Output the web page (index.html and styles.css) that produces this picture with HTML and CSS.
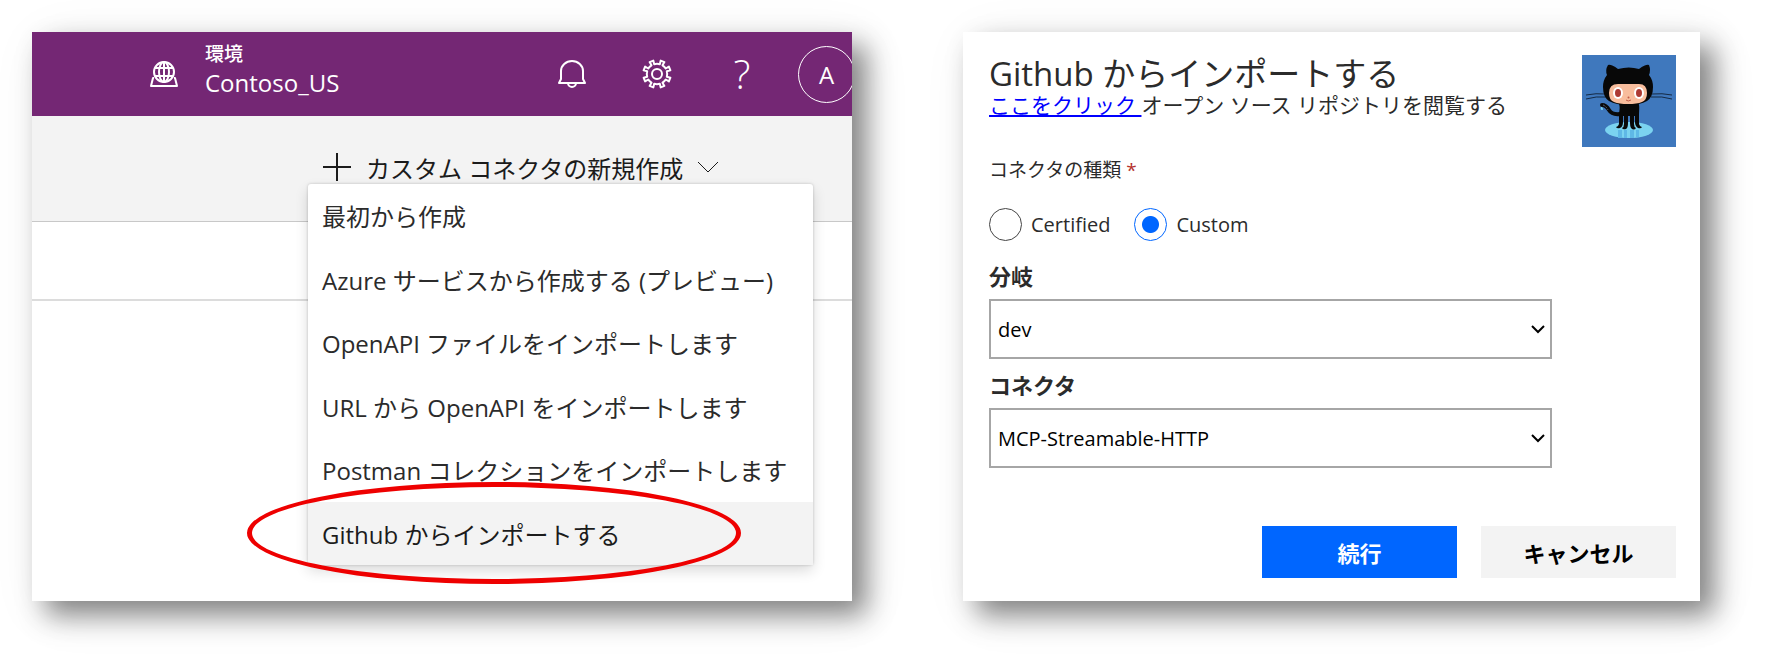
FILE: index.html
```html
<!DOCTYPE html>
<html lang="ja">
<head>
    <meta charset="UTF-8">
    <meta name="viewport" content="width=device-width, initial-scale=1.0">
    <title>Github からインポートする</title>
    <link rel="stylesheet" href="styles.css">
</head>
<body>
    <main class="panels">
        <section class="panel portal">
            <header class="header">
                <svg class="env-icon" viewBox="0 0 30 28" aria-hidden="true">
                    <circle cx="15" cy="12" r="10"/>
                    <ellipse cx="15" cy="12" rx="5" ry="10"/>
                    <path d="M15 2v20M6 8h18M6 16h18"/>
                    <path d="M5 18H4L2 26h26l-2-8h-1"/>
                </svg>
                <div class="env">
                    <div class="env-label">環境</div>
                    <div class="env-name">Contoso_US</div>
                </div>
                <div class="header-icons">
                    <button class="icon-button" aria-label="通知">
                        <svg viewBox="0 0 30 30">
                            <path d="M2 24l2-4v-8a11 10 0 0 1 22 0v8l2 4z"/>
                            <path d="M11 24a4 4 0 0 0 8 0"/>
                        </svg>
                    </button>
                    <button class="icon-button" aria-label="設定">
                        <svg viewBox="0 0 30 30">
                            <path d="M12.2 5.2L11.3 1.6L7.6 3.1L9.5 6.3A10.200 10.200 0 0 0 6.300 9.500L3.100 7.600L1.600 11.300L5.200 12.200A10.200 10.200 0 0 0 5.200 17.800L1.600 18.700L3.100 22.400L6.300 20.500A10.200 10.200 0 0 0 9.500 23.700L7.600 26.900L11.300 28.400L12.200 24.800A10.200 10.200 0 0 0 17.800 24.800L18.700 28.400L22.400 26.900L20.500 23.700A10.200 10.200 0 0 0 23.700 20.500L26.900 22.400L28.400 18.700L24.800 17.800A10.200 10.200 0 0 0 24.800 12.200L28.400 11.300L26.900 7.600L23.700 9.500A10.200 10.200 0 0 0 20.500 6.300L22.400 3.100L18.700 1.600L17.800 5.200A10.200 10.200 0 0 0 12.200 5.200z"/>
                            <circle cx="15" cy="15" r="5"/>
                        </svg>
                    </button>
                    <button class="icon-button help" aria-label="ヘルプ">?</button>
                </div>
                <button class="avatar">A</button>
            </header>

            <div class="toolbar">
                <div class="dropdown">
                    <button class="new-connector">
                        <svg class="plus" viewBox="0 0 30 30"><path d="M15 1v28M1 15h28"/></svg>
                        カスタム コネクタの新規作成
                        <svg class="chevron" viewBox="0 0 22 12"><path d="M1 1l10 10L21 1"/></svg>
                    </button>
                    <div class="menu">
                        <button class="menu-item">最初から作成</button>
                        <button class="menu-item">Azure サービスから作成する (プレビュー)</button>
                        <button class="menu-item">OpenAPI ファイルをインポートします</button>
                        <button class="menu-item">URL から OpenAPI をインポートします</button>
                        <button class="menu-item">Postman コレクションをインポートします</button>
                        <button class="menu-item active">Github からインポートする</button>
                        <span class="highlight"></span>
                    </div>
                </div>
            </div>
            <div class="list-head"></div>
        </section>

        <form class="panel dialog">
            <div class="dialog-head">
                <div>
                    <h1>Github からインポートする</h1>
                    <p><a href="#">ここをクリック </a>オープン ソース リポジトリを閲覧する</p>
                </div>
                <svg class="octocat" viewBox="0 0 94 92" role="img" aria-label="GitHub">
                    <rect width="94" height="92" fill="#3f78bd"/>
                    <ellipse cx="47" cy="75" rx="24" ry="8" fill="#7bd3f0"/>
                    <path d="M36 75h4v8h-4zM42 75h3v8h-3zM48 75h4v8h-4zM54 75h3v7h-3z" fill="#5fb8e6"/>
                    <path d="M4 40q10-2 20-1M4 44q10-3 21-2M90 40q-10-2-20-1M90 44q-10-3-21-2" fill="none" stroke="#152a45"/>
                    <path d="M20 50q4 0 7 5t11 4" fill="none" stroke="#0a0a0a" stroke-width="4" stroke-linecap="round"/>
                    <path d="M21 50q3 1 5 5" fill="none" stroke="#526579" stroke-dasharray="2 1"/>
                    <path d="M19 52q-1 3 1 3t0-3" fill="#7bd3f0"/>
                    <path d="M38 47h18c2 3 1 8 1 15v6q0 3 3 4-1 2-4 1-3-2-3-6v-6h-1v8q0 3 2 4-2 3-5 0-1-2-1-5v-7h-2v7q0 5-2 6-3 1-4-1 2-1 2-4v-8h-1v6q0 5-3 6-3 1-4-1 3-1 3-4v-7c0-6 2-9-1-14z" fill="#080808"/>
                    <path d="M26 10Q29 9 36 14Q47 11 57 14Q64 9 67 10Q69 15 67 20Q71 25 71 32Q71 42 65 46Q58 50 46 50Q34 50 27 46Q21 42 21 32Q21 25 25 20Q23 15 26 10z" fill="#080808"/>
                    <path d="M36 29h21q8 0 8 9 0 7-5 9-5 2-14 2t-14-2q-5-2-5-9 0-9 9-9z" fill="#f8bd9d"/>
                    <ellipse cx="36" cy="38" rx="5" ry="6" fill="#fff"/>
                    <ellipse cx="57" cy="38" rx="5" ry="6" fill="#fff"/>
                    <ellipse cx="36" cy="38" rx="3" ry="4" fill="#ad3a34"/>
                    <ellipse cx="57" cy="38" rx="3" ry="4" fill="#ad3a34"/>
                    <circle cx="46.500" cy="42.500" r="1" fill="#c25b48"/>
                    <path d="M44 45q2 2 5 0" fill="none" stroke="#c25b48"/>
                </svg>
            </div>

            <fieldset>
                <legend>コネクタの種類 <span class="required">*</span></legend>
                <div class="radios">
                    <label><input type="radio" name="type">Certified</label>
                    <label><input type="radio" name="type" checked>Custom</label>
                </div>
            </fieldset>

            <div class="field">
                <label for="branch">分岐</label>
                <div class="select-box">
                    <select id="branch">
                        <option>dev</option>
                    </select>
                    <svg viewBox="0 0 14 9"><path d="M1 1l6 6 6-6"/></svg>
                </div>
            </div>
            <div class="field">
                <label for="connector">コネクタ</label>
                <div class="select-box">
                    <select id="connector">
                        <option>MCP-Streamable-HTTP</option>
                    </select>
                    <svg viewBox="0 0 14 9"><path d="M1 1l6 6 6-6"/></svg>
                </div>
            </div>

            <div class="actions">
                <button type="button" class="button primary">続行</button>
                <button type="button" class="button">キャンセル</button>
            </div>
        </form>
    </main>
</body>
</html>
```
FILE: styles.css
```css
* {
    box-sizing: border-box;
}
body {
    margin: 0;
    background: #fff;
    color: #2b2b2b;
    font-family: "Open Sans", "Noto Sans CJK JP", sans-serif;
}
button {
    border: none;
    padding: 0;
    background: none;
    color: inherit;
    font-family: inherit;
    cursor: pointer;
}
svg {
    display: block;
    flex: none;
}
.panels {
    display: grid;
    grid-template-columns: 820fr 737fr;
    gap: 111px;
    padding: 32px 65px 65px 32px;
}
.panel {
    min-width: 0;
    background: #fff;
    box-shadow: 14px 14px 26px rgba(0, 0, 0, 0.46), 10px 10px 50px rgba(0, 0, 0, 0.08);
}

/* portal */
.header {
    display: flex;
    align-items: center;
    gap: 41px;
    height: 84px;
    padding-left: 117px;
    overflow: hidden;
    background: #742774;
    color: #fff;
}
.header svg {
    fill: none;
    stroke: #fff;
    stroke-width: 2;
    stroke-linejoin: round;
}
.header .env-icon {
    width: 30px;
    height: 28px;
    margin-right: -15px;
}
.env {
    padding-bottom: 8px;
}
.env-label {
    font-size: 19px;
    font-weight: 500;
    line-height: 26px;
}
.env-name {
    font-size: 24px;
    line-height: 32px;
}
.header-icons {
    display: flex;
    gap: 55px;
    margin-left: auto;
}
.icon-button {
    width: 30px;
    height: 30px;
}
.help {
    font-size: 40px;
    font-weight: 300;
    line-height: 30px;
}
.avatar {
    flex: none;
    width: 57px;
    height: 57px;
    margin-right: -3px;
    border: 1px solid #fff;
    border-radius: 50%;
    font-size: 24px;
}
.toolbar {
    height: 106px;
    padding: 34px 0 0 290px;
    border-bottom: 1px solid #c8c8c8;
    background: #f3f3f3;
}
.dropdown {
    position: relative;
    width: max-content;
}
.new-connector {
    display: flex;
    align-items: center;
    gap: 14px;
    height: 34px;
    color: #1b1b1b;
    font-size: 24px;
    white-space: nowrap;
}
.plus {
    width: 30px;
    height: 30px;
    fill: none;
    stroke: #1b1b1b;
    stroke-width: 2;
}
.chevron {
    width: 22px;
    height: 12px;
    fill: none;
    stroke: #1b1b1b;
}
.menu {
    position: absolute;
    top: 100%;
    left: -14px;
    display: grid;
    grid-auto-rows: 1fr;
    width: 505px;
    height: 381px;
    border-radius: 3px;
    background: #fff;
    box-shadow: 0 0 3px rgba(0, 0, 0, 0.2), 0 6px 14px rgba(0, 0, 0, 0.14);
}
.menu-item {
    padding: 0 14px;
    font-size: 24px;
    text-align: left;
    white-space: nowrap;
}
.menu-item.active {
    background: #f3f3f3;
    color: #1b1b1b;
}
.highlight {
    position: absolute;
    bottom: -19px;
    left: -61px;
    width: 494px;
    height: 102px;
    border: 5px solid #e00;
    border-radius: 50%;
    pointer-events: none;
}
.list-head {
    height: 79px;
    border-bottom: 2px solid #dcdcdc;
}

/* dialog */
.dialog {
    padding: 23px 24px 23px 26px;
}
.dialog-head {
    display: flex;
    justify-content: space-between;
    height: 92px;
}
h1 {
    margin: 0;
    font-size: 33px;
    font-weight: 400;
    line-height: 38px;
}
p {
    margin: 0;
    font-size: 21px;
    line-height: 24px;
}
a {
    color: #00f;
}
.octocat {
    width: 94px;
    height: 92px;
}
fieldset {
    margin: 10px 0 22px;
    padding: 0;
    border: none;
}
legend {
    padding: 0;
    font-size: 19px;
    line-height: 26px;
}
.required {
    color: #b5322d;
}
.radios {
    display: flex;
    gap: 24px;
    padding-top: 25px;
}
.radios label {
    display: flex;
    align-items: center;
    gap: 9px;
    height: 33px;
    font-size: 20px;
}
.radios input {
    appearance: none;
    width: 33px;
    height: 33px;
    margin: 0;
    border: 1px solid #444;
    border-radius: 50%;
}
.radios input:checked {
    border-color: #0066ff;
    background: radial-gradient(circle, #0066ff 8px, transparent 9px);
}
.field {
    margin-bottom: 13px;
}
.field label {
    display: block;
    margin-bottom: 10px;
    font-size: 22px;
    font-weight: 700;
    line-height: 26px;
}
.select-box {
    position: relative;
    width: 82%;
}
.select-box select {
    appearance: none;
    display: block;
    width: 100%;
    height: 60px;
    padding: 0 7px;
    border: 2px solid #a6a6a6;
    border-radius: 0;
    background: #fff;
    color: #000;
    font-family: inherit;
    font-size: 20px;
}
.select-box svg {
    position: absolute;
    top: 26px;
    right: 7px;
    width: 14px;
    height: 9px;
    fill: none;
    stroke: #000;
    stroke-width: 2;
    pointer-events: none;
}
.actions {
    display: flex;
    justify-content: flex-end;
    gap: 24px;
    padding-top: 45px;
}
.button {
    width: 195px;
    height: 52px;
    background: #f3f3f3;
    color: #000;
    font-size: 22px;
    font-weight: 700;
}
.button.primary {
    background: #0066ff;
    color: #fff;
}
```
